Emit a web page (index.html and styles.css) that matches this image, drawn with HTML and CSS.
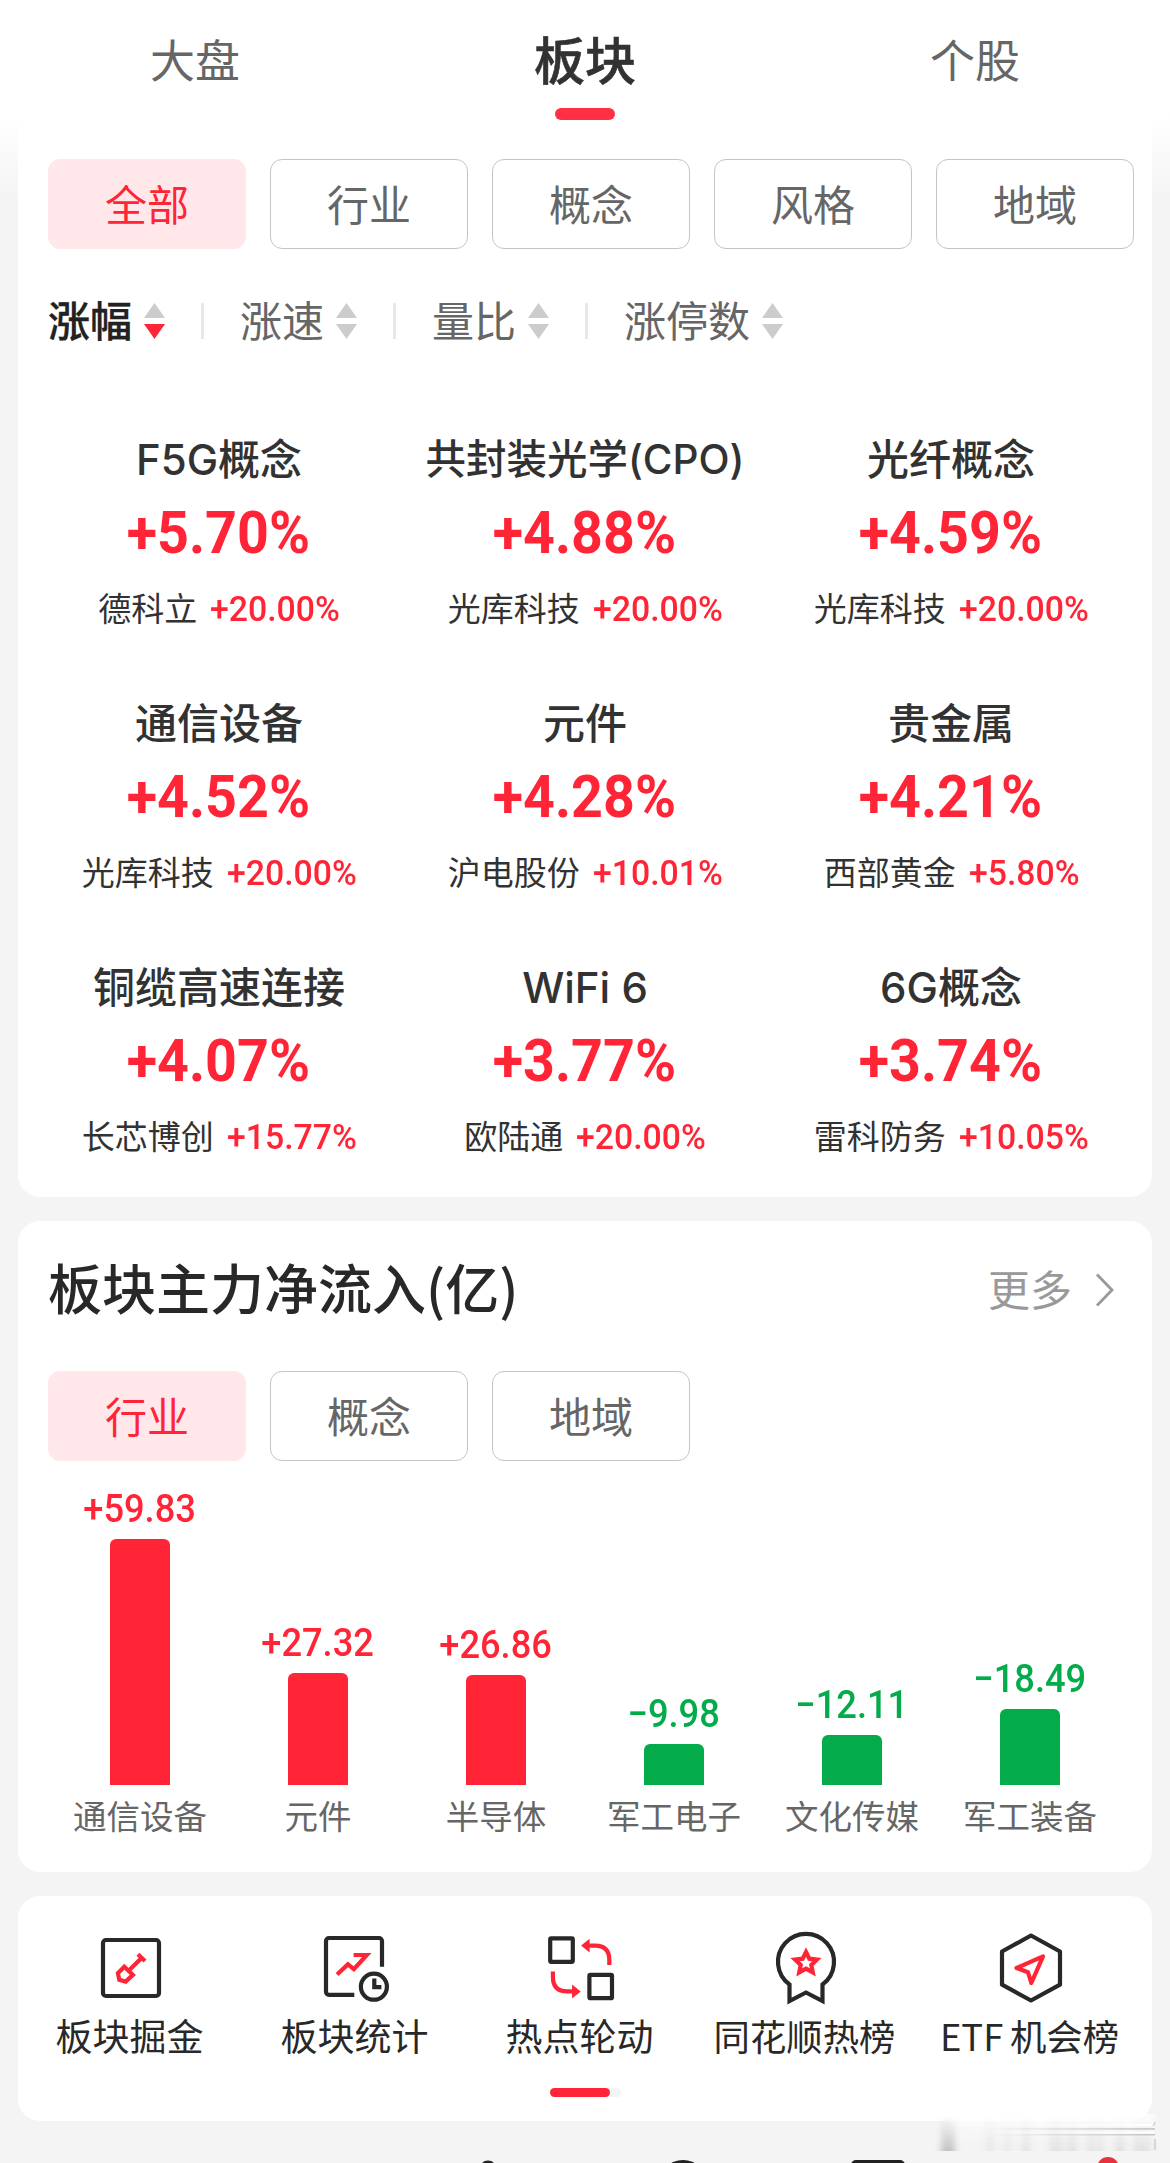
FILE: index.html
```html
<!DOCTYPE html>
<html lang="zh-CN">
<head>
<meta charset="utf-8">
<title>板块</title>
<link rel="stylesheet" href="styles.css">
</head>
<body>
<main class="page">
  <section class="card sectors">
    <nav class="tabs">
      <a class="tab">大盘</a>
      <a class="tab tab-active">板块</a>
      <a class="tab">个股</a>
    </nav>
    <div class="chips">
      <span class="chip chip-active">全部</span><span class="chip">行业</span><span class="chip">概念</span><span class="chip">风格</span><span class="chip">地域</span>
    </div>
    <div class="sorts">
      <span class="sort sort-active"><span class="sort-text">涨幅</span><svg class="arrows" viewBox="0 0 21 36"><path d="M10.500 0L21 15H0z"/><path class="down" d="M0 21h21L10.500 36z"/></svg></span>
      <i class="divider"></i>
      <span class="sort"><span class="sort-text">涨速</span><svg class="arrows" viewBox="0 0 21 36"><path d="M10.500 0L21 15H0z"/><path d="M0 21h21L10.500 36z"/></svg></span>
      <i class="divider"></i>
      <span class="sort"><span class="sort-text">量比</span><svg class="arrows" viewBox="0 0 21 36"><path d="M10.500 0L21 15H0z"/><path d="M0 21h21L10.500 36z"/></svg></span>
      <i class="divider"></i>
      <span class="sort"><span class="sort-text">涨停数</span><svg class="arrows" viewBox="0 0 21 36"><path d="M10.500 0L21 15H0z"/><path d="M0 21h21L10.500 36z"/></svg></span>
    </div>
    <div class="grid">
      <article class="cell"><h3 class="name">F5G概念</h3><b class="change">+5.70%</b><p class="leader">德科立<span class="gain">+20.00%</span></p></article>
      <article class="cell"><h3 class="name name-long">共封装光学(CPO)</h3><b class="change">+4.88%</b><p class="leader">光库科技<span class="gain">+20.00%</span></p></article>
      <article class="cell"><h3 class="name">光纤概念</h3><b class="change">+4.59%</b><p class="leader">光库科技<span class="gain">+20.00%</span></p></article>
      <article class="cell"><h3 class="name">通信设备</h3><b class="change">+4.52%</b><p class="leader">光库科技<span class="gain">+20.00%</span></p></article>
      <article class="cell"><h3 class="name">元件</h3><b class="change">+4.28%</b><p class="leader">沪电股份<span class="gain">+10.01%</span></p></article>
      <article class="cell"><h3 class="name">贵金属</h3><b class="change">+4.21%</b><p class="leader">西部黄金<span class="gain">+5.80%</span></p></article>
      <article class="cell"><h3 class="name">铜缆高速连接</h3><b class="change">+4.07%</b><p class="leader">长芯博创<span class="gain">+15.77%</span></p></article>
      <article class="cell"><h3 class="name">WiFi 6</h3><b class="change">+3.77%</b><p class="leader">欧陆通<span class="gain">+20.00%</span></p></article>
      <article class="cell"><h3 class="name">6G概念</h3><b class="change">+3.74%</b><p class="leader">雷科防务<span class="gain">+10.05%</span></p></article>
    </div>
  </section>

  <section class="card inflow">
    <header class="inflow-head">
      <h2 class="inflow-title">板块主力净流入(亿)</h2>
      <a class="more"><span class="more-text">更多</span><svg class="chevron" viewBox="0 0 20 34"><path d="M2 1.500L17 17 2 32.500"/></svg></a>
    </header>
    <div class="chips">
      <span class="chip chip-active">行业</span><span class="chip">概念</span><span class="chip">地域</span>
    </div>
    <div class="chart">
      <div class="column up"><span class="amount">+59.83</span><i class="bar" style="height:246px"></i><span class="label">通信设备</span></div>
      <div class="column up"><span class="amount">+27.32</span><i class="bar" style="height:112px"></i><span class="label">元件</span></div>
      <div class="column up"><span class="amount">+26.86</span><i class="bar" style="height:110px"></i><span class="label">半导体</span></div>
      <div class="column fall"><span class="amount">−9.98</span><i class="bar" style="height:41px"></i><span class="label">军工电子</span></div>
      <div class="column fall"><span class="amount">−12.11</span><i class="bar" style="height:50px"></i><span class="label">文化传媒</span></div>
      <div class="column fall"><span class="amount">−18.49</span><i class="bar" style="height:76px"></i><span class="label">军工装备</span></div>
    </div>
  </section>

  <section class="card tools">
    <div class="tool-row">
      <a class="tool">
        <svg class="icon" viewBox="0 0 90 76"><rect class="ink" x="18" y="8" width="56" height="56" rx="3"/><path class="red" d="M39.300 34.800l8.600 8.100-7.200 6.700-6.400-1.700-1.400-6.700zM43.900 38.500L56.800 25.700M52.900 22.300L60 29"/></svg>
        <span class="tool-name">板块掘金</span>
      </a>
      <a class="tool">
        <svg class="icon" viewBox="0 0 90 76"><path class="ink" d="M72 34.800V9a3 3 0 0 0-3-3H19a3 3 0 0 0-3 3v50.800a3 3 0 0 0 3 3h25.300"/><circle class="ink" cx="63.900" cy="54.700" r="13"/><path class="ink" d="M64.300 46.600v8.600h7.100"/><path class="red" d="M27.100 42.500l10.800-10.100 6 4.800L56.800 23H43.600"/></svg>
        <span class="tool-name">板块统计</span>
      </a>
      <a class="tool">
        <svg class="icon" viewBox="0 0 90 76"><rect class="ink" x="15.200" y="6.400" width="22.600" height="23.400" rx="1"/><rect class="ink" x="54.400" y="42.800" width="22.600" height="23.400" rx="1"/><path class="red" d="M54 13.600h6Q74.300 13.600 74.300 28v5.100M17.900 39.500v5.500Q17.900 59.400 32 59.400h6"/><path class="red-fill" d="M46.100 13.600l8.500-6.800v13.800zM45.700 59.400l-8.600-6.800v13.800z"/></svg>
        <span class="tool-name">热点轮动</span>
      </a>
      <a class="tool">
        <svg class="icon" viewBox="0 0 90 76"><path class="ink" d="M29.500 69V52.500A28 28 0 1 1 62.500 52.500V69L46 60.500z"/><path class="red" d="M46 20l3.300 6.700 7.600.9-5.600 5.300 1.500 7.500-6.800-3.700-6.800 3.700 1.500-7.500-5.600-5.300 7.600-.9z"/></svg>
        <span class="tool-name tool-name-long">同花顺热榜</span>
      </a>
      <a class="tool">
        <svg class="icon" viewBox="0 0 90 76"><path class="ink round" d="M46 3.500L75 19.500V52.700L46 68.500 17 52.700V19.500z"/><path class="red round" d="M58 24.300L31.500 36 43 40.200l3.300 10.800z"/></svg>
        <span class="tool-name tool-name-long tool-name-etf">ETF 机会榜</span>
      </a>
    </div>
    <div class="pager"><i class="pager-thumb"></i></div>
  </section>
</main>
<footer class="dock">
  <svg class="dock-art" viewBox="0 0 1170 42">
    <circle cx="488" cy="48" r="8.500"/>
    <circle cx="683" cy="63" r="24"/>
    <rect x="851" y="39" width="54" height="20" rx="5"/>
    <circle class="dot" cx="1108" cy="47" r="11"/>
  </svg>
  <div class="smear">
    <svg class="smear-art" viewBox="0 0 240 44">
      <defs>
        <linearGradient id="fade" x1="0" y1="0" x2="0" y2="1"><stop offset="0" stop-color="#fff" stop-opacity=".95"/><stop offset=".45" stop-color="#fff" stop-opacity=".4"/><stop offset="1" stop-color="#fff" stop-opacity="0"/></linearGradient>
        <linearGradient id="dark" x1="0" y1="0" x2="0" y2="1"><stop offset="0" stop-color="#999" stop-opacity="0"/><stop offset="1" stop-color="#777" stop-opacity=".4"/></linearGradient>
        <linearGradient id="line" x1="0" y1="0" x2="1" y2="0"><stop offset="0" stop-color="#aaa" stop-opacity="0"/><stop offset="1" stop-color="#aaa" stop-opacity=".6"/></linearGradient>
        <linearGradient id="gleam" x1="0" y1="0" x2="1" y2="0"><stop offset="0" stop-color="#fff" stop-opacity="0"/><stop offset="1" stop-color="#fff"/></linearGradient>
        <filter id="soft" x="-50%" width="200%" y="0" height="100%"><feGaussianBlur stdDeviation="3 0"/></filter>
      </defs>
      <rect x="20" y="2" width="205" height="30" fill="url(#fade)" filter="url(#soft)"/>
      <g fill="url(#dark)" filter="url(#soft)">
        <rect x="12" y="3" width="14" height="36"/>
        <g opacity=".35"><rect x="58" y="3" width="6" height="36"/><rect x="76" y="3" width="5" height="36"/><rect x="93" y="3" width="8" height="36"/><rect x="120" y="3" width="14" height="36"/><rect x="138" y="3" width="10" height="36"/><rect x="158" y="3" width="7" height="36"/><rect x="168" y="3" width="6" height="36"/><rect x="186" y="3" width="10" height="36"/><rect x="204" y="3" width="18" height="36"/></g>
      </g>
      <path fill="url(#gleam)" d="M60 12h165v2H60zM60 19.500h165v2H60z"/>
      <path fill="url(#line)" d="M60 16h166v1.800H60zM60 22h166v1.500H60z"/>
      <path fill="none" stroke="#bbb" d="M224 14l2.500-4M226 27v11"/>
    </svg>
  </div>
</footer>
</body>
</html>
```
FILE: styles.css
```css
* { box-sizing: border-box; margin: 0; padding: 0; }

body {
  position: relative;
  width: 1170px;
  height: 2163px;
  overflow: hidden;
  background: linear-gradient(#fff 115px, #f4f4f4 200px);
  color: #323232;
  font-family: Inter, "Noto Sans CJK SC", sans-serif;
  font-weight: 400;
}

h2, h3 { font-weight: 500; }
i { display: block; }

.page {
  display: flex;
  flex-direction: column;
  gap: 24px;
  height: 2121px;
  padding: 0 18px;
}

.card { background: #fff; border-radius: 22px; }

.sectors { height: 1197px; border-radius: 0 0 22px 22px; }

.tabs { display: flex; height: 159px; margin: 0 -18px; }

.tab {
  display: flex;
  flex: 1;
  flex-direction: column;
  align-items: center;
  padding-top: 32px;
  color: #666;
  font-size: 45px;
  line-height: 60px;
}

.tab-active { color: #323232; font-size: 51px; font-weight: 500; -webkit-text-stroke: .6px #323232; }

.tab-active::after {
  width: 60px;
  height: 12px;
  margin-top: 16px;
  border-radius: 6px;
  background: #ff3046;
  content: "";
}

.chips { display: flex; gap: 24px; padding-left: 30px; }

.chip {
  width: 198px;
  height: 90px;
  border: 1px solid #c4c4c4;
  border-radius: 12px;
  color: #666;
  font-size: 42px;
  line-height: 91px;
  text-align: center;
}

.chip-active { border-color: #ffe7ea; background: #ffe7ea; color: #ff2436; }

.sorts {
  display: flex;
  gap: 36px;
  align-items: center;
  margin: 45px 0 0 30px;
  height: 54px;
}

.sort {
  display: flex;
  gap: 12px;
  align-items: center;
  color: #666;
  font-size: 42px;
  line-height: 56px;
}

.sort-text { padding-top: 2px; }
.sort-active { color: #222; font-weight: 500; -webkit-text-stroke: .3px #222; }
.arrows { width: 21px; height: 36px; fill: #ccc; }
.sort-active .down { fill: #ff2436; }
.divider { width: 3px; height: 36px; background: #e8e8e8; }

.grid {
  display: grid;
  grid-template-columns: repeat(3, 366px);
  grid-auto-rows: 264px;
  margin: 82px 0 0 18px;
}

.cell { display: flex; flex-direction: column; align-items: center; white-space: nowrap; }
.name { font-size: 42px; line-height: 60px; }
.name-long { font-size: 40.5px; }

.change {
  margin: 12px 2px 0 0;
  color: #ff2436;
  font: 700 58.500px/62px Roboto, sans-serif;
  transform: scaleX(.95);
}

.leader {
  display: flex;
  gap: 13px;
  margin-top: 22px;
  font-size: 33px;
  line-height: 46px;
}

.gain {
  margin-right: -5px;
  padding-top: 1px;
  color: #ff2436;
  font-family: Roboto, sans-serif;
  font-size: 35px;
  font-weight: 500;
  transform: scaleX(.965);
  transform-origin: left;
}

.inflow { height: 651px; }

.inflow-head {
  display: flex;
  align-items: center;
  justify-content: space-between;
  height: 150px;
  padding: 0 37px 12px 30px;
}

.inflow-title { margin-top: -6px; color: #282828; font-family: "Noto Sans CJK SC", sans-serif; font-size: 54px; line-height: 78px; }
.more { display: flex; gap: 23px; align-items: center; color: #999; font-size: 42px; }
.more-text { margin-top: -6px; }
.chevron { width: 20px; height: 34px; fill: none; stroke: #999; stroke-width: 2.800; }

.chart { display: flex; height: 379px; margin-left: 33px; }

.column {
  display: flex;
  flex-direction: column;
  align-items: center;
  justify-content: flex-end;
  width: 178px;
}

.amount {
  margin-bottom: 7px;
  font: 500 39px/46px Roboto, sans-serif;
  transform: scaleX(.93);
}

.bar { width: 60px; border-radius: 6px 6px 0 0; }
.up .amount { color: #ff2436; }
.up .bar { background: #ff2436; }
.fall .amount { color: #04ab4a; }
.fall .bar { background: #04ab4a; }
.label { margin-top: 9px; color: #666; font-size: 33.500px; line-height: 46px; }

.tools { height: 225px; }
.tool-row { display: flex; height: 192px; padding-top: 36px; margin-left: -1px; }

.tool {
  display: flex;
  flex: 0 0 225px;
  flex-direction: column;
  align-items: center;
  color: #282828;
}

.icon { width: 90px; height: 76px; overflow: visible; fill: none; stroke-width: 4.200; }
.ink { stroke: #282828; }
.red { stroke: #ff2436; }
.red-fill { fill: #ff2436; }
.round { stroke-linejoin: round; }
.tool-name { margin-top: 7px; font-family: "Noto Sans CJK SC", sans-serif; font-size: 37px; line-height: 40px; white-space: nowrap; }
.tool-name-long { font-size: 36.400px; }
.tool-name-etf { word-spacing: -1.500px; }
.pager { width: 71px; height: 9px; margin: 0 auto; border-radius: 5px; background: #f4f4f4; }
.pager-thumb { width: 60px; height: 9px; border-radius: 5px; background: #ff2436; }

.dock { height: 42px; }
.dock-art { display: block; width: 1170px; height: 42px; fill: #222; }
.dot { fill: #e9303d; }
.smear { position: absolute; top: 2112px; left: 929px; }
.smear-art { display: block; width: 240px; height: 44px; }
```
